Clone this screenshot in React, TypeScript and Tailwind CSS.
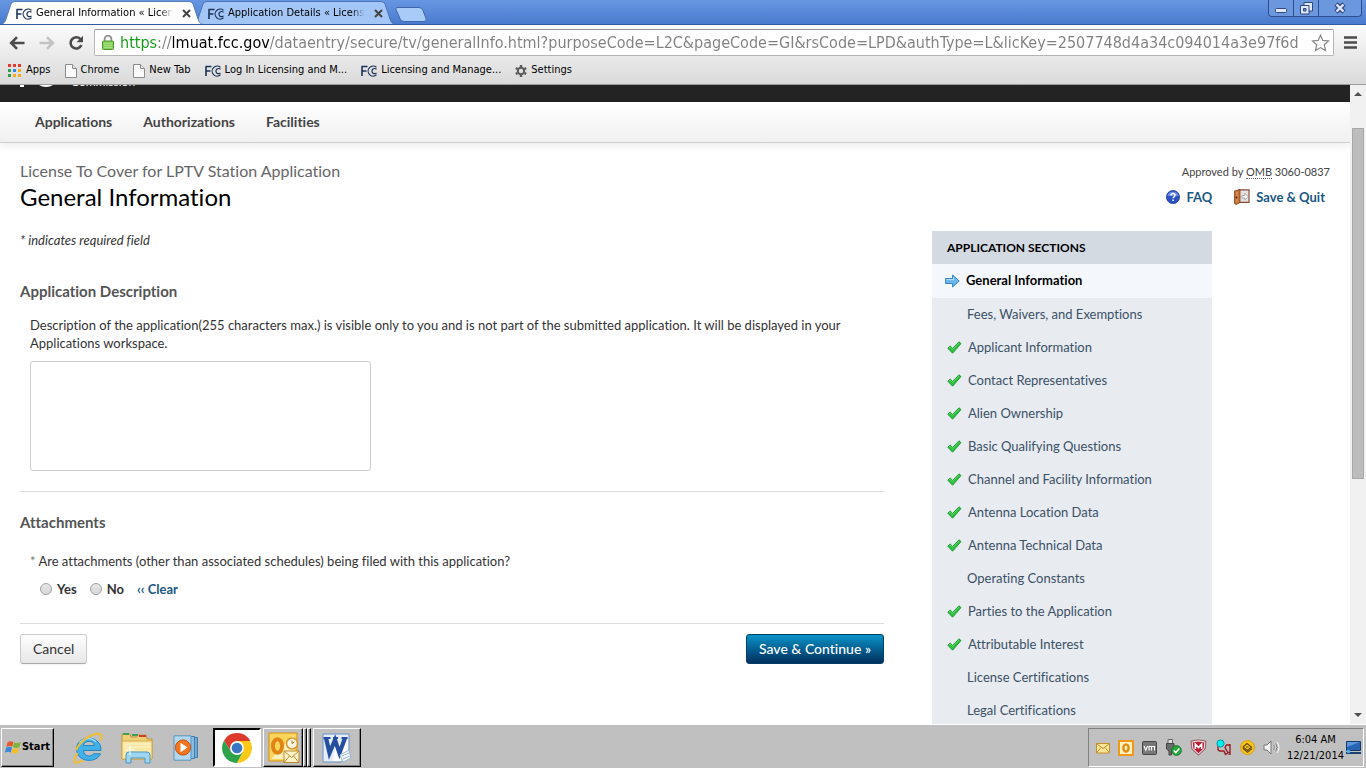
import { useState } from 'react';
import type { ReactNode } from 'react';

const pageUrl =
  'https://lmuat.fcc.gov/dataentry/secure/tv/generalInfo.html?purposeCode=L2C&pageCode=GI&rsCode=LPD&authType=L&licKey=2507748d4a34c094014a3e97f6d40027';

type SectionStatus = 'current' | 'done' | 'open';

const sections: { label: string; status: SectionStatus }[] = [
  { label: 'General Information', status: 'current' },
  { label: 'Fees, Waivers, and Exemptions', status: 'open' },
  { label: 'Applicant Information', status: 'done' },
  { label: 'Contact Representatives', status: 'done' },
  { label: 'Alien Ownership', status: 'done' },
  { label: 'Basic Qualifying Questions', status: 'done' },
  { label: 'Channel and Facility Information', status: 'done' },
  { label: 'Antenna Location Data', status: 'done' },
  { label: 'Antenna Technical Data', status: 'done' },
  { label: 'Operating Constants', status: 'open' },
  { label: 'Parties to the Application', status: 'done' },
  { label: 'Attributable Interest', status: 'done' },
  { label: 'License Certifications', status: 'open' },
  { label: 'Legal Certifications', status: 'open' },
];

/* ---------- icons ---------- */

const FccIcon = () => (
  <svg width="16" height="16" viewBox="0 0 16 16" className="shrink-0" fill="none" stroke="#1c3358">
    <path d="M1 13V3.5M0.5 3.5h6M1 8h4.5" strokeWidth="1.6" />
    <path d="M15.5 4.4A5 5 0 1 0 15.5 11.8" strokeWidth="1.2" />
    <path d="M15.5 6.4A2.6 2.6 0 1 0 15.5 9.8" strokeWidth="1.2" />
  </svg>
);

const PageIcon = () => (
  <svg width="12" height="14" viewBox="0 0 12 14" className="shrink-0">
    <path d="M.5 .5h7l4 4v9H.5z" fill="#fafafa" stroke="#8c8c8c" />
    <path d="M7.5 .5v4h4" fill="#e4e4e4" stroke="#8c8c8c" />
  </svg>
);

const AppsIcon = () => (
  <svg width="14" height="14" viewBox="0 0 14 14" className="shrink-0">
    <path d="M0 0h3v3H0zM5 0h3v3H5zM10 0h3v3H10z" fill="#e33b2e" />
    <path d="M0 5h3v3H0z" fill="#2f9e4f" />
    <path d="M5 5h3v3H5z" fill="#2d87e2" />
    <path d="M10 5h3v3H10zM5 10h3v3H5zM10 10h3v3H10z" fill="#f2ad1d" />
    <path d="M0 10h3v3H0z" fill="#2f9e4f" />
  </svg>
);

const GearIcon = () => (
  <svg width="12" height="12" viewBox="0 0 12 12" className="shrink-0" stroke="#5a5a5a" fill="none">
    <circle cx="6" cy="6" r="3.2" strokeWidth="2" />
    <path
      d="M6 0v2M6 10v2M.8 3l1.7 1M9.5 8l1.7 1M.8 9l1.7-1M9.5 4l1.7-1"
      strokeWidth="2.4"
    />
  </svg>
);

const BackIcon = ({ color }: { color: string }) => (
  <svg width="16" height="14" viewBox="0 0 16 14" fill="none" stroke={color} strokeWidth="2.6">
    <path d="M8 1.2L2.2 7L8 12.8M2.5 7H15.5" />
  </svg>
);

const ReloadIcon = () => (
  <svg width="16" height="16" viewBox="0 0 16 16">
    <path
      d="M12.4 4.2A5.6 5.6 0 1 0 13.4 10"
      fill="none"
      stroke="#4b4b4b"
      strokeWidth="2.6"
    />
    <path d="M15 .8V7.2H8.6z" fill="#4b4b4b" />
  </svg>
);

const LockIcon = () => (
  <svg width="12" height="15" viewBox="0 0 12 15" className="shrink-0">
    <path d="M2.6 7V4a3.4 3.4 0 0 1 6.8 0v3" fill="none" stroke="#8f8f8f" strokeWidth="1.8" />
    <rect x=".5" y="6" width="11" height="8.5" rx="1" fill="#86cf5a" stroke="#4c9a2a" />
    <path d="M2 8.5h8M2 10.5h8M2 12.5h8" stroke="#a9e183" />
  </svg>
);

const StarIcon = () => (
  <svg width="19" height="18" viewBox="0 0 19 18">
    <path
      d="M9.5 1.2l2.3 5.2 5.7.6-4.2 3.8 1.2 5.7-5-2.9-5 2.9 1.2-5.7L1.5 7l5.7-.6z"
      fill="#fff"
      stroke="#858585"
      strokeWidth="1.2"
    />
  </svg>
);

const CheckIcon = () => (
  <svg width="15" height="13" viewBox="0 0 15 13" className="shrink-0">
    <path
      d="M.8 7.2L3.2 5l2.4 2.4L12 .8l2 1.8-8.4 9.6z"
      fill="#2fc040"
      stroke="#1f9c36"
      strokeLinejoin="round"
    />
    <path d="M2 7l1.2-1 2.4 2.5L12 2.2" fill="none" stroke="#62d562" />
  </svg>
);

const ArrowIcon = () => (
  <svg width="15" height="14" viewBox="0 0 15 14" className="shrink-0">
    <path
      d="M.6 4.5h7V1l6.6 6-6.6 6V9.5h-7z"
      fill="#6bb6ec"
      stroke="#3583c6"
      strokeLinejoin="round"
    />
    <path d="M1.6 5.6h7V3.4" fill="none" stroke="#b7e0fb" />
  </svg>
);

const HelpIcon = () => (
  <svg width="14" height="14" viewBox="0 0 14 14" className="shrink-0">
    <circle cx="7" cy="7" r="6.6" fill="#2f52c4" stroke="#2442a0" strokeWidth=".8" />
    <path d="M1.4 6a5.7 5.2 0 0 1 11.2 0z" fill="#6c8be6" />
    <path
      d="M5 5.4c0-2.5 4-2.3 4-.1 0 1.5-1.9 1.4-1.9 3M7.1 9.4v1.6"
      fill="none"
      stroke="#fff"
      strokeWidth="1.5"
    />
  </svg>
);

const DoorIcon = () => (
  <svg width="16" height="16" viewBox="0 0 16 16" className="shrink-0">
    <path d="M5 .8h10v12.5H5z" fill="#e3e3e3" stroke="#8d4a35" strokeWidth="1.2" />
    <path d="M.5 2L6 .5v13L2 15.6.5 14.5z" fill="#c87438" stroke="#7b3c1b" strokeWidth=".8" />
    <path d="M3 3v10.500" stroke="#e0a06c" strokeWidth=".8" />
    <circle cx="2.4" cy="8.5" r=".9" fill="#3e2010" />
    <path d="M8 6.500h2.800V4.300l3.400 3.400-3.400 3.400V9H8z" fill="#fff" stroke="#9a9a9a" strokeWidth=".8" />
  </svg>
);

const WindowsFlag = () => (
  <svg width="16" height="15" viewBox="0 0 16 15" className="shrink-0">
    <path d="M2.6 2.2C4.5.8 6.5.9 8.5 2L7.2 6.8C5.2 5.7 3.4 5.8 1.3 7z" fill="#e8592a" />
    <path d="M9.2 2.4c2.1 1 4.2.8 6.6-.5L14.4 6.9c-2.3 1.3-4.4 1.3-6.5.2z" fill="#7db53a" />
    <path d="M1.1 7.8c2-1.2 3.9-1.2 5.9-.2L5.7 12.4C3.7 11.4 1.9 11.5-.2 12.7z" fill="#3a86d8" />
    <path d="M7.700 8c2.100 1 4.200 1 6.500-.2l-1.400 4.900c-2.200 1.200-4.300 1.200-6.400.1z" fill="#f5bd2c" />
  </svg>
);

const ExplorerLogo = () => (
  <svg width="34" height="34" viewBox="0 0 34 34">
    <path
      d="M30 19.500H12.500c.4 6.500 7.800 6.800 10 3.300h7C26 32.500 5.500 32 5.500 18 5.500 3.500 30.500 3 30 19.500zM12.500 14.500h10.800c-.5-5.500-9.800-5.500-10.800 0z"
      fill="#41b1ea"
      stroke="#1676b8"
      strokeWidth=".8"
    />
    <path d="M8.500 12c3.500-5 11-6 16.500-1.500" fill="none" stroke="#9bdcf8" strokeWidth="1.500" />
    <path
      d="M6.500 22C0 33 4 33 12 29.500M5 19C10 9 24 0 29.500 3.500c2 1.500 1 3.500 0 6"
      fill="none"
      stroke="#f3bd2d"
      strokeWidth="2"
    />
  </svg>
);

const FolderLogo = () => (
  <svg width="34" height="32" viewBox="0 0 34 32">
    <path d="M2 5V2h8l1 3h6V3h9l1 4h5v20H2z" fill="#efcf74" stroke="#bf963a" />
    <path d="M3 2h6M12 3h6" stroke="#449d54" strokeWidth="2" />
    <path d="M19 4h7" stroke="#cf3d2c" strokeWidth="2" />
    <path d="M2 9h30v18H2z" fill="#fae7a4" stroke="#d0aa50" />
    <path d="M4 12h26M4 15h26" stroke="#fff4cb" />
    <path d="M6 31V23q0-3 3-3h18q3 0 3 3v8h-5v-5H11v5z" fill="#9ed6f0" stroke="#4d97c4" />
    <path d="M10 13v10M5 18h10" stroke="#fff" />
  </svg>
);

const MediaLogo = () => (
  <svg width="30" height="26" viewBox="0 0 30 26">
    <path d="M10 2.5h15.5v20H10z" fill="#6fa9d4" stroke="#447da9" />
    <path d="M6 1.5h16.5v22H6z" fill="#89bee2" stroke="#447da9" />
    <path d="M2 .8h17v24.4H2z" fill="#b1d8ef" stroke="#5b94bd" />
    <circle cx="11" cy="12.5" r="7.6" fill="#f27522" stroke="#c9500d" />
    <path d="M8.500 7.800l7 4.700-7 4.700z" fill="#fff" />
  </svg>
);

const ChromeLogo = () => (
  <svg width="30" height="30" viewBox="0 0 28 28">
    <path d="M14 7.5h12.4A14 14 0 0 0 1.9 7L8.4 17.3z" fill="#db3a2c" />
    <path d="M14 7.5h12.4A14 14 0 0 1 14 28l5.6-10.7z" fill="#fbc916" />
    <path d="M8.4 17.3L1.9 7A14 14 0 0 0 14 28l5.6-10.7z" fill="#2da24b" />
    <circle cx="14" cy="14" r="6.5" fill="#fff" />
    <circle cx="14" cy="14" r="5" fill="#3977c5" />
  </svg>
);

const OutlookLogo = () => (
  <svg width="33" height="33" viewBox="0 0 33 33">
    <path d="M2 2h28v22l-6 6H2z" fill="#fbd45a" stroke="#d38e16" />
    <path d="M5 27L27 4v19l-5 5H5z" fill="#fdf0ba" />
    <ellipse cx="10.5" cy="15" rx="4.6" ry="6.8" fill="none" stroke="#df8415" strokeWidth="4" />
    <circle cx="25" cy="12.5" r="5.5" fill="#fff8e2" stroke="#d9952a" strokeWidth="1.5" />
    <path d="M25 9.5V12.5l2.5-1.5" fill="none" stroke="#a96d14" />
    <path d="M17 20h15v11.5H17z" fill="#fff3cb" stroke="#bb892d" />
    <path d="M17 20l7.5 6.5L32 20M17 31.5l5.5-6.5M32 31.5L26.500 25" fill="none" stroke="#bb892d" />
  </svg>
);

const WordLogo = () => (
  <svg width="32" height="32" viewBox="0 0 32 32">
    <path d="M2 2h26v20l-8 8H2z" fill="#e4edf8" stroke="#6d93c5" />
    <path d="M15 13l12-6v15l-7 7h-8z" fill="#fff" />
    <path
      d="M5 6l3.500 15L14 8l4.500 13L24 6"
      fill="none"
      stroke="#244f9e"
      strokeWidth="4.200"
    />
    <path d="M2.500 6h7M12 6h5M20.500 6h6" stroke="#244f9e" strokeWidth="2" />
    <path d="M19 23l9-5 2 8-8 4z" fill="#f5f8fc" stroke="#9db5d5" />
    <path d="M21 24l7-3M22 27l7-3" stroke="#9db5d5" />
  </svg>
);

const MailTray = () => (
  <svg width="14" height="16" viewBox="0 0 14 16">
    <path d="M.5 3.5h13v9.500H.5z" fill="#fbe59b" stroke="#c68f2c" />
    <path d="M.5 3.500L7 8.500l6.500-5M.5 13L5 7.500M13.500 13L9 7.500" fill="none" stroke="#c68f2c" />
  </svg>
);

const OutlookTray = () => (
  <svg width="16" height="16" viewBox="0 0 16 16">
    <path d="M1 1h14v14H1z" fill="#fff2c5" stroke="#f0981a" strokeWidth="2" />
    <ellipse cx="8" cy="8" rx="2.6" ry="3.6" fill="none" stroke="#e58c0d" strokeWidth="2.4" />
  </svg>
);

const VmTray = () => (
  <svg width="15" height="16" viewBox="0 0 15 16">
    <rect x=".5" y="1.5" width="14" height="13" rx="1" fill="#777" stroke="#454545" />
    <path
      d="M2 6l1.800 4.200L5.600 6M7 10.500V6.500h2.500v4M9.500 6.500H12.500v4"
      fill="none"
      stroke="#fff"
      strokeWidth="1.2"
    />
  </svg>
);

const UsbTray = () => (
  <svg width="17" height="17" viewBox="0 0 17 17">
    <path d="M3 .5h4.500v4H3z" fill="#ddd" stroke="#666" />
    <path d="M1.500 4.500H9V10l-2.500 2v4h-2.500v-4L1.500 10z" fill="#6b6b6b" stroke="#444" />
    <circle cx="11.5" cy="11.5" r="4.8" fill="#27a83b" stroke="#157526" />
    <path d="M8.800 11.500l2 2 3.500-4" fill="none" stroke="#fff" strokeWidth="1.6" />
  </svg>
);

const ShieldTray = () => (
  <svg width="17" height="17" viewBox="0 0 16 16">
    <path d="M.8 1.8L8 .6l7.2 1.2-.8 7.7L8 15.400 1.600 9.500z" fill="#b91e36" stroke="#777" strokeWidth=".6" />
    <path d="M2 2.800L8 1.800l6 1-.7 6.200L8 14 2.700 9z" fill="none" stroke="#f3dfe2" />
    <path d="M5 9.500V4.800L8 8l3-3.200v4.700" fill="none" stroke="#fff" strokeWidth="1.5" />
  </svg>
);

const NetTray = () => (
  <svg width="17" height="17" viewBox="0 0 17 17" fill="none" stroke="#961d23" strokeWidth="1.4">
    <path d="M3 7v3q0 2 2.500 2H9l1.500 3.500L14.500 13M15 5v11M15 6h-3.500l-1.500 2.500L14 15.500" />
    <circle cx="5.5" cy="4.5" r="3.6" fill="#00f0f5" stroke="#049aa0" strokeWidth="1" />
  </svg>
);

const KeyTray = () => (
  <svg width="15" height="15" viewBox="0 0 15 15">
    <circle cx="7.5" cy="7.5" r="7" fill="#f9c51a" stroke="#d99d0c" />
    <path
      d="M3 7l4-3.500L11.500 7 7.500 10.500zM3 8.500l4.500 3.800L12 8.500M6 7h2.500"
      fill="none"
      stroke="#664c0a"
      strokeWidth="1.1"
    />
  </svg>
);

const SpeakerTray = () => (
  <svg width="17" height="15" viewBox="0 0 17 15" fill="none" stroke="#777">
    <path d="M1 5h3l4-4v13l-4-4H1z" fill="#f2f2f2" />
    <path d="M10 5q1.500 2.500 0 5M12 3.500q3 4 0 8M14 2q4 5.500 0 11" stroke="#fff" />
    <path d="M10.500 5q1.500 2.500 0 5M12.500 3.500q3 4 0 8" />
  </svg>
);

const DesktopIcon = () => (
  <svg width="15" height="13" viewBox="0 0 15 13">
    <path d="M.5 .5h14v9H.5z" fill="#2864b4" stroke="#16386b" />
    <path d="M1 1h13L1 6z" fill="#5c97dd" />
    <path d="M0 12h15" stroke="#1c3f72" strokeWidth="2" />
    <circle cx="2.5" cy="10.5" r="1.8" fill="#48b5f1" />
  </svg>
);

/* ---------- browser frame ---------- */

const BrowserTab = ({ title, active }: { title: string; active?: boolean }) => (
  <div className={`relative flex h-6 w-51 items-center pl-4 ${active ? 'z-10' : '-ml-3'}`}>
    <svg
      className="absolute inset-0 size-full"
      viewBox="0 0 204 24"
      preserveAspectRatio="none"
    >
      <path
        d="M0 24.5C4 24 5 22 6 19L11 4Q12 1.500 15 1.500H189Q192 1.500 193 4L198 19C199 22 200 24 204 24.500z"
        fill={active ? '#fcfcfc' : '#a3c6f6'}
        stroke={active ? '#5d7fb8' : '#4a74b8'}
      />
    </svg>
    <div className="relative flex flex-1 items-center pt-[3px]">
      <FccIcon />
      <span className="ml-1 w-[137px] overflow-hidden whitespace-nowrap mask-r-from-90% text-[11px]">
        {title}
      </span>
      <button aria-label="Close tab" className="ml-2 p-px">
        <svg width="9" height="9" viewBox="0 0 9 9" stroke="#444" strokeWidth="2">
          <path d="M1 1l7 7M8 1L1 8" />
        </svg>
      </button>
    </div>
  </div>
);

const TitleBar = () => (
  <div className="flex h-6 shrink-0 items-start justify-between bg-linear-to-b from-[#6797e2] to-[#4a7acd]">
    <div className="flex">
      <BrowserTab title="General Information « Licensing" active />
      <BrowserTab title="Application Details « Licensing and" />
      <button aria-label="New tab" className="-ml-px mt-1">
        <svg width="32" height="17" viewBox="0 0 32 17">
          <path
            d="M2 1.5h22q3 0 4 3l3 8q1 3-2 3H9q-3 0-4-3l-4-9q-.6-2 1-2z"
            fill="#a8cbf7"
            stroke="#3f66ab"
          />
        </svg>
      </button>
    </div>
    <div className="mr-1 flex h-[17px] divide-x divide-[#2f4d8e] rounded-b border border-t-0 border-[#2f4d8e] bg-[#6b97df]">
      <button aria-label="Minimize" className="flex w-[25px] items-end justify-center pb-[3px]">
        <svg width="12" height="5" viewBox="0 0 12 5">
          <rect x=".5" y=".5" width="11" height="4" rx="1" fill="#dfe8f8" stroke="#33497c" />
        </svg>
      </button>
      <button aria-label="Restore" className="flex w-[25px] items-center justify-center">
        <svg width="13" height="13" viewBox="0 0 13 13" stroke="#33497c">
          <path d="M4 .5h8.5V9H4z" fill="#dfe8f8" />
          <path d="M.5 3.5H9V12H.5z" fill="#dfe8f8" />
          <path d="M3.5 6.5H6V9H3.500z" fill="#6b97df" />
        </svg>
      </button>
      <button aria-label="Close" className="flex w-[42px] items-center justify-center">
        <svg width="12" height="12" viewBox="0 0 12 12" fill="none">
          <path d="M2 2l8 8M10 2l-8 8" stroke="#33497c" strokeWidth="4.6" />
          <path d="M2.500 2.500l7 7M9.500 2.500l-7 7" stroke="#dfe8f8" strokeWidth="2.4" />
        </svg>
      </button>
    </div>
  </div>
);

const Bookmark = ({ icon, children }: { icon: ReactNode; children: ReactNode }) => (
  <a href="#" className="flex items-center gap-1 whitespace-nowrap">
    {icon}
    {children}
  </a>
);

const Toolbar = () => (
  <div className="flex shrink-0 flex-col border-t border-b border-t-[#33599f] border-b-[#9c9c9c] bg-linear-to-b from-[#fbfbfb] to-[#dadada]">
    <div className="flex h-[35px] items-center pl-[9px]">
      <button aria-label="Back">
        <BackIcon color="#4b4b4b" />
      </button>
      <button aria-label="Forward" className="ml-[14px] -scale-x-100">
        <BackIcon color="#c2c2c2" />
      </button>
      <button aria-label="Reload" className="ml-[13px]">
        <ReloadIcon />
      </button>
      <div className="ml-[10px] flex h-[27px] flex-1 items-center rounded-xs border border-[#b5b5b5] border-t-[#979797] bg-white pl-[7px]">
        <LockIcon />
        <input
          type="text"
          aria-label="Address"
          defaultValue={pageUrl}
          className="mr-3 ml-[6px] min-w-0 flex-1 bg-[linear-gradient(90deg,#119911_37px,#808080_37px,#808080_52px,#000_52px,#000_149px,#808080_149px)] bg-clip-text text-[16px] text-transparent outline-none"
        />
        <button aria-label="Bookmark this page" className="mr-[3px]">
          <StarIcon />
        </button>
      </div>
      <button aria-label="Menu" className="mr-[9px] ml-[10px]">
        <svg width="13" height="13" viewBox="0 0 13 13" stroke="#4b4b4b" strokeWidth="2.6">
          <path d="M0 1.5h13M0 6.5h13M0 11.5h13" />
        </svg>
      </button>
    </div>
    <div className="flex h-6 items-center gap-[14px] pb-[3px] pl-2 text-[11px] text-black">
      <Bookmark icon={<AppsIcon />}>Apps</Bookmark>
      <Bookmark icon={<PageIcon />}>Chrome</Bookmark>
      <Bookmark icon={<PageIcon />}>New Tab</Bookmark>
      <Bookmark icon={<FccIcon />}>Log In Licensing and M...</Bookmark>
      <Bookmark icon={<FccIcon />}>Licensing and Manage...</Bookmark>
      <Bookmark icon={<GearIcon />}>Settings</Bookmark>
    </div>
  </div>
);

const Scrollbar = () => (
  <div className="flex w-4 shrink-0 flex-col items-center justify-between bg-[#f1f1f1] py-[7px]">
    <svg width="8" height="4" viewBox="0 0 8 4" className="shrink-0">
      <path d="M0 4L4 0l4 4z" fill="#505050" />
    </svg>
    <div className="flex w-3 flex-1 flex-col pt-[32px]">
      <div className="h-[60%] border border-[#a8a8a8] bg-[#bcbcbc]" />
    </div>
    <svg width="8" height="4" viewBox="0 0 8 4" className="shrink-0">
      <path d="M0 0l4 4 4-4z" fill="#505050" />
    </svg>
  </div>
);

/* ---------- page ---------- */

const SiteHeader = () => (
  <header>
    {/* the page is scrolled, so only the foot of the logo shows */}
    <div className="flex h-[17px] items-start overflow-hidden bg-[#232323] pl-5 text-white">
      <svg width="40" height="26" viewBox="0 0 40 26" className="-mt-6" fill="none" stroke="#fff">
        <path d="M2 0v26M2 3h12" strokeWidth="4" />
        <circle cx="26" cy="13" r="11" strokeWidth="4" />
      </svg>
      <span className="-mt-[11px] ml-[11px] text-xs leading-4">Commission</span>
    </div>
    <nav className="flex h-[41px] items-center gap-[31px] border-b border-[#d0d0d0] bg-linear-to-b from-white to-[#f0f0f0] pl-[35px] text-sm font-bold text-[#444] shadow-[0_3px_8px_rgba(0,0,0,0.08)]">
      <a href="#">Applications</a>
      <a href="#">Authorizations</a>
      <a href="#">Facilities</a>
    </nav>
  </header>
);

const SectionLink = ({ label, status }: { label: string; status: SectionStatus }) => {
  if (status === 'current') {
    return (
      <li className="flex h-[34px] items-center gap-[6px] bg-[#f4f8fc] pl-[13px] font-bold text-black">
        <ArrowIcon />
        <a href="#">{label}</a>
      </li>
    );
  }
  return (
    <li className="flex h-[33px] items-center gap-[6px] pl-[15px]">
      {status === 'done' ? <CheckIcon /> : <span className="w-[14px]" />}
      <a href="#">{label}</a>
    </li>
  );
};

const ApplicationSections = () => (
  <aside className="w-70 shrink-0 bg-[#e8ebf0] text-[#3b5166]">
    <h2 className="flex h-[33px] items-center bg-[#d3dae2] pl-[15px] text-xs font-bold text-black">
      APPLICATION SECTIONS
    </h2>
    <ul>
      {sections.map((section) => (
        <SectionLink key={section.label} {...section} />
      ))}
    </ul>
  </aside>
);

const GeneralInfoForm = () => {
  const [hasAttachments, setHasAttachments] = useState('');
  const radioStyle =
    'size-3 appearance-none rounded-full border border-[#a0a0a0] bg-linear-to-b from-[#e6e6e6] to-[#d8d8d8] checked:border-4 checked:border-[#555]';

  return (
    <form className="w-[65%] max-w-216" onSubmit={(e) => e.preventDefault()}>
      <p className="leading-[18px] text-[#333] italic">* indicates required field</p>

      <section className="mt-8 border-b border-[#ddd] pb-5">
        <h2 className="text-[15px] leading-5 font-bold text-[#555]">Application Description</h2>
        <label htmlFor="description" className="mt-[15px] block pl-[10px] leading-[18px]">
          Description of the application(255 characters max.) is visible only to you and is not
          part of the submitted application. It will be displayed in your Applications workspace.
        </label>
        <textarea
          id="description"
          maxLength={255}
          className="mt-[9px] ml-[10px] block h-[110px] w-[341px] resize-none rounded-[3px] border border-[#ccc] bg-white p-1"
        />
      </section>

      <section className="border-b border-[#ddd] pt-5 pb-[25px]">
        <h2 className="text-[15px] leading-5 font-bold text-[#555]">Attachments</h2>
        <fieldset className="mt-5 pl-[10px]">
          <legend className="leading-[18px]">
            <span className="text-[#777]">*</span> Are attachments (other than associated
            schedules) being filed with this application?
          </legend>
          <div className="mt-[10px] flex items-center gap-[13px] pl-[10px] leading-[18px] font-bold">
            <label className="flex items-center gap-[5px]">
              <input
                type="radio"
                name="attachments"
                className={radioStyle}
                checked={hasAttachments === 'yes'}
                onChange={() => setHasAttachments('yes')}
              />
              Yes
            </label>
            <label className="flex items-center gap-[5px]">
              <input
                type="radio"
                name="attachments"
                className={radioStyle}
                checked={hasAttachments === 'no'}
                onChange={() => setHasAttachments('no')}
              />
              No
            </label>
            <button
              type="button"
              className="text-[#1a5784]"
              onClick={() => setHasAttachments('')}
            >
              ‹‹ Clear
            </button>
          </div>
        </fieldset>
      </section>

      <div className="flex justify-between pt-[10px] text-sm">
        <button
          type="button"
          className="h-[30px] rounded-[3px] border border-[#ccc] border-b-[#aaa] bg-linear-to-b from-white to-[#e6e6e6] px-3 shadow-xs"
        >
          Cancel
        </button>
        <button
          type="submit"
          className="h-[30px] rounded-[3px] border border-[#04406a] bg-linear-to-b from-[#0b94c8] to-[#03305f] px-3 font-medium text-white"
        >
          Save & Continue »
        </button>
      </div>
    </form>
  );
};

const Page = () => (
  <div className="flex-1 overflow-hidden bg-white font-[Lato,sans-serif] text-[13px] text-[#333] [font-variant-ligatures:none]">
    <SiteHeader />
    <div className="flex justify-between px-5 pt-[17px]">
      <div>
        <p className="text-base leading-[22px] text-[#666]">
          License To Cover for LPTV Station Application
        </p>
        <h1 className="text-2xl leading-[30px] text-black">General Information</h1>
      </div>
      <div className="text-right">
        <p className="text-[11px] leading-6 text-[#444]">
          Approved by{' '}
          <abbr
            title="Office of Management and Budget"
            className="border-b border-dotted border-[#666] no-underline"
          >
            OMB
          </abbr>{' '}
          3060-0837
        </p>
        <div className="flex justify-end gap-[22px] pr-[5px] leading-[26px] font-bold text-[#1a5784]">
          <a href="#" className="flex items-center gap-[6px]">
            <HelpIcon />
            FAQ
          </a>
          <a href="#" className="flex items-center gap-[6px]">
            <DoorIcon />
            Save & Quit
          </a>
        </div>
      </div>
    </div>
    <div className="mt-[19px] flex gap-12 pl-5">
      <GeneralInfoForm />
      <ApplicationSections />
    </div>
  </div>
);

/* ---------- taskbar ---------- */

const raised =
  'border border-t-white border-l-white border-r-black border-b-black shadow-[inset_-1px_-1px_#808080]';

const Taskbar = () => (
  <footer className="flex h-11 shrink-0 items-stretch border-t border-white bg-[#c0c0c0] pt-[3px] pb-px text-[11px] text-black">
    <button
      className={`ml-px flex w-[53px] items-center justify-center gap-px font-bold ${raised}`}
    >
      <WindowsFlag />
      Start
    </button>
    <button aria-label="Internet Explorer" className="ml-[17px]">
      <ExplorerLogo />
    </button>
    <button aria-label="Windows Explorer" className="ml-[15px]">
      <FolderLogo />
    </button>
    <button aria-label="Media Player" className="ml-[18px]">
      <MediaLogo />
    </button>
    <button
      aria-label="Chrome"
      className="ml-[11px] flex w-[48px] items-center justify-center border-2 border-t-black border-l-black border-r-white border-b-white bg-white"
    >
      <ChromeLogo />
    </button>
    <div className="ml-[2px] flex">
      <button aria-label="Outlook" className={`flex w-10 items-center justify-center ${raised}`}>
        <OutlookLogo />
      </button>
      <span className={`w-1 ${raised}`} />
      <span className={`w-1 ${raised}`} />
    </div>
    <button aria-label="Word" className={`ml-[2px] flex w-[48px] items-center justify-center ${raised}`}>
      <WordLogo />
    </button>
    <div className="mr-[2px] ml-auto flex w-[276px] items-center justify-between border border-t-[#808080] border-l-[#808080] border-r-white border-b-white pr-[2px] pl-[7px]">
      <div className="flex items-center gap-2">
        <MailTray />
        <OutlookTray />
        <VmTray />
        <UsbTray />
        <ShieldTray />
        <NetTray />
        <KeyTray />
        <SpeakerTray />
      </div>
      <div className="flex items-center gap-[2px]">
        <div className="text-center leading-4">
          <div>6:04 AM</div>
          <div>12/21/2014</div>
        </div>
        <DesktopIcon />
      </div>
    </div>
  </footer>
);

const App = () => (
  <div className="flex h-screen flex-col overflow-hidden font-[DejaVu_Sans_Condensed,Noto_Sans,sans-serif]">
    <TitleBar />
    <Toolbar />
    <main className="flex min-h-0 flex-1">
      <Page />
      <Scrollbar />
    </main>
    <Taskbar />
  </div>
);

export default App;
